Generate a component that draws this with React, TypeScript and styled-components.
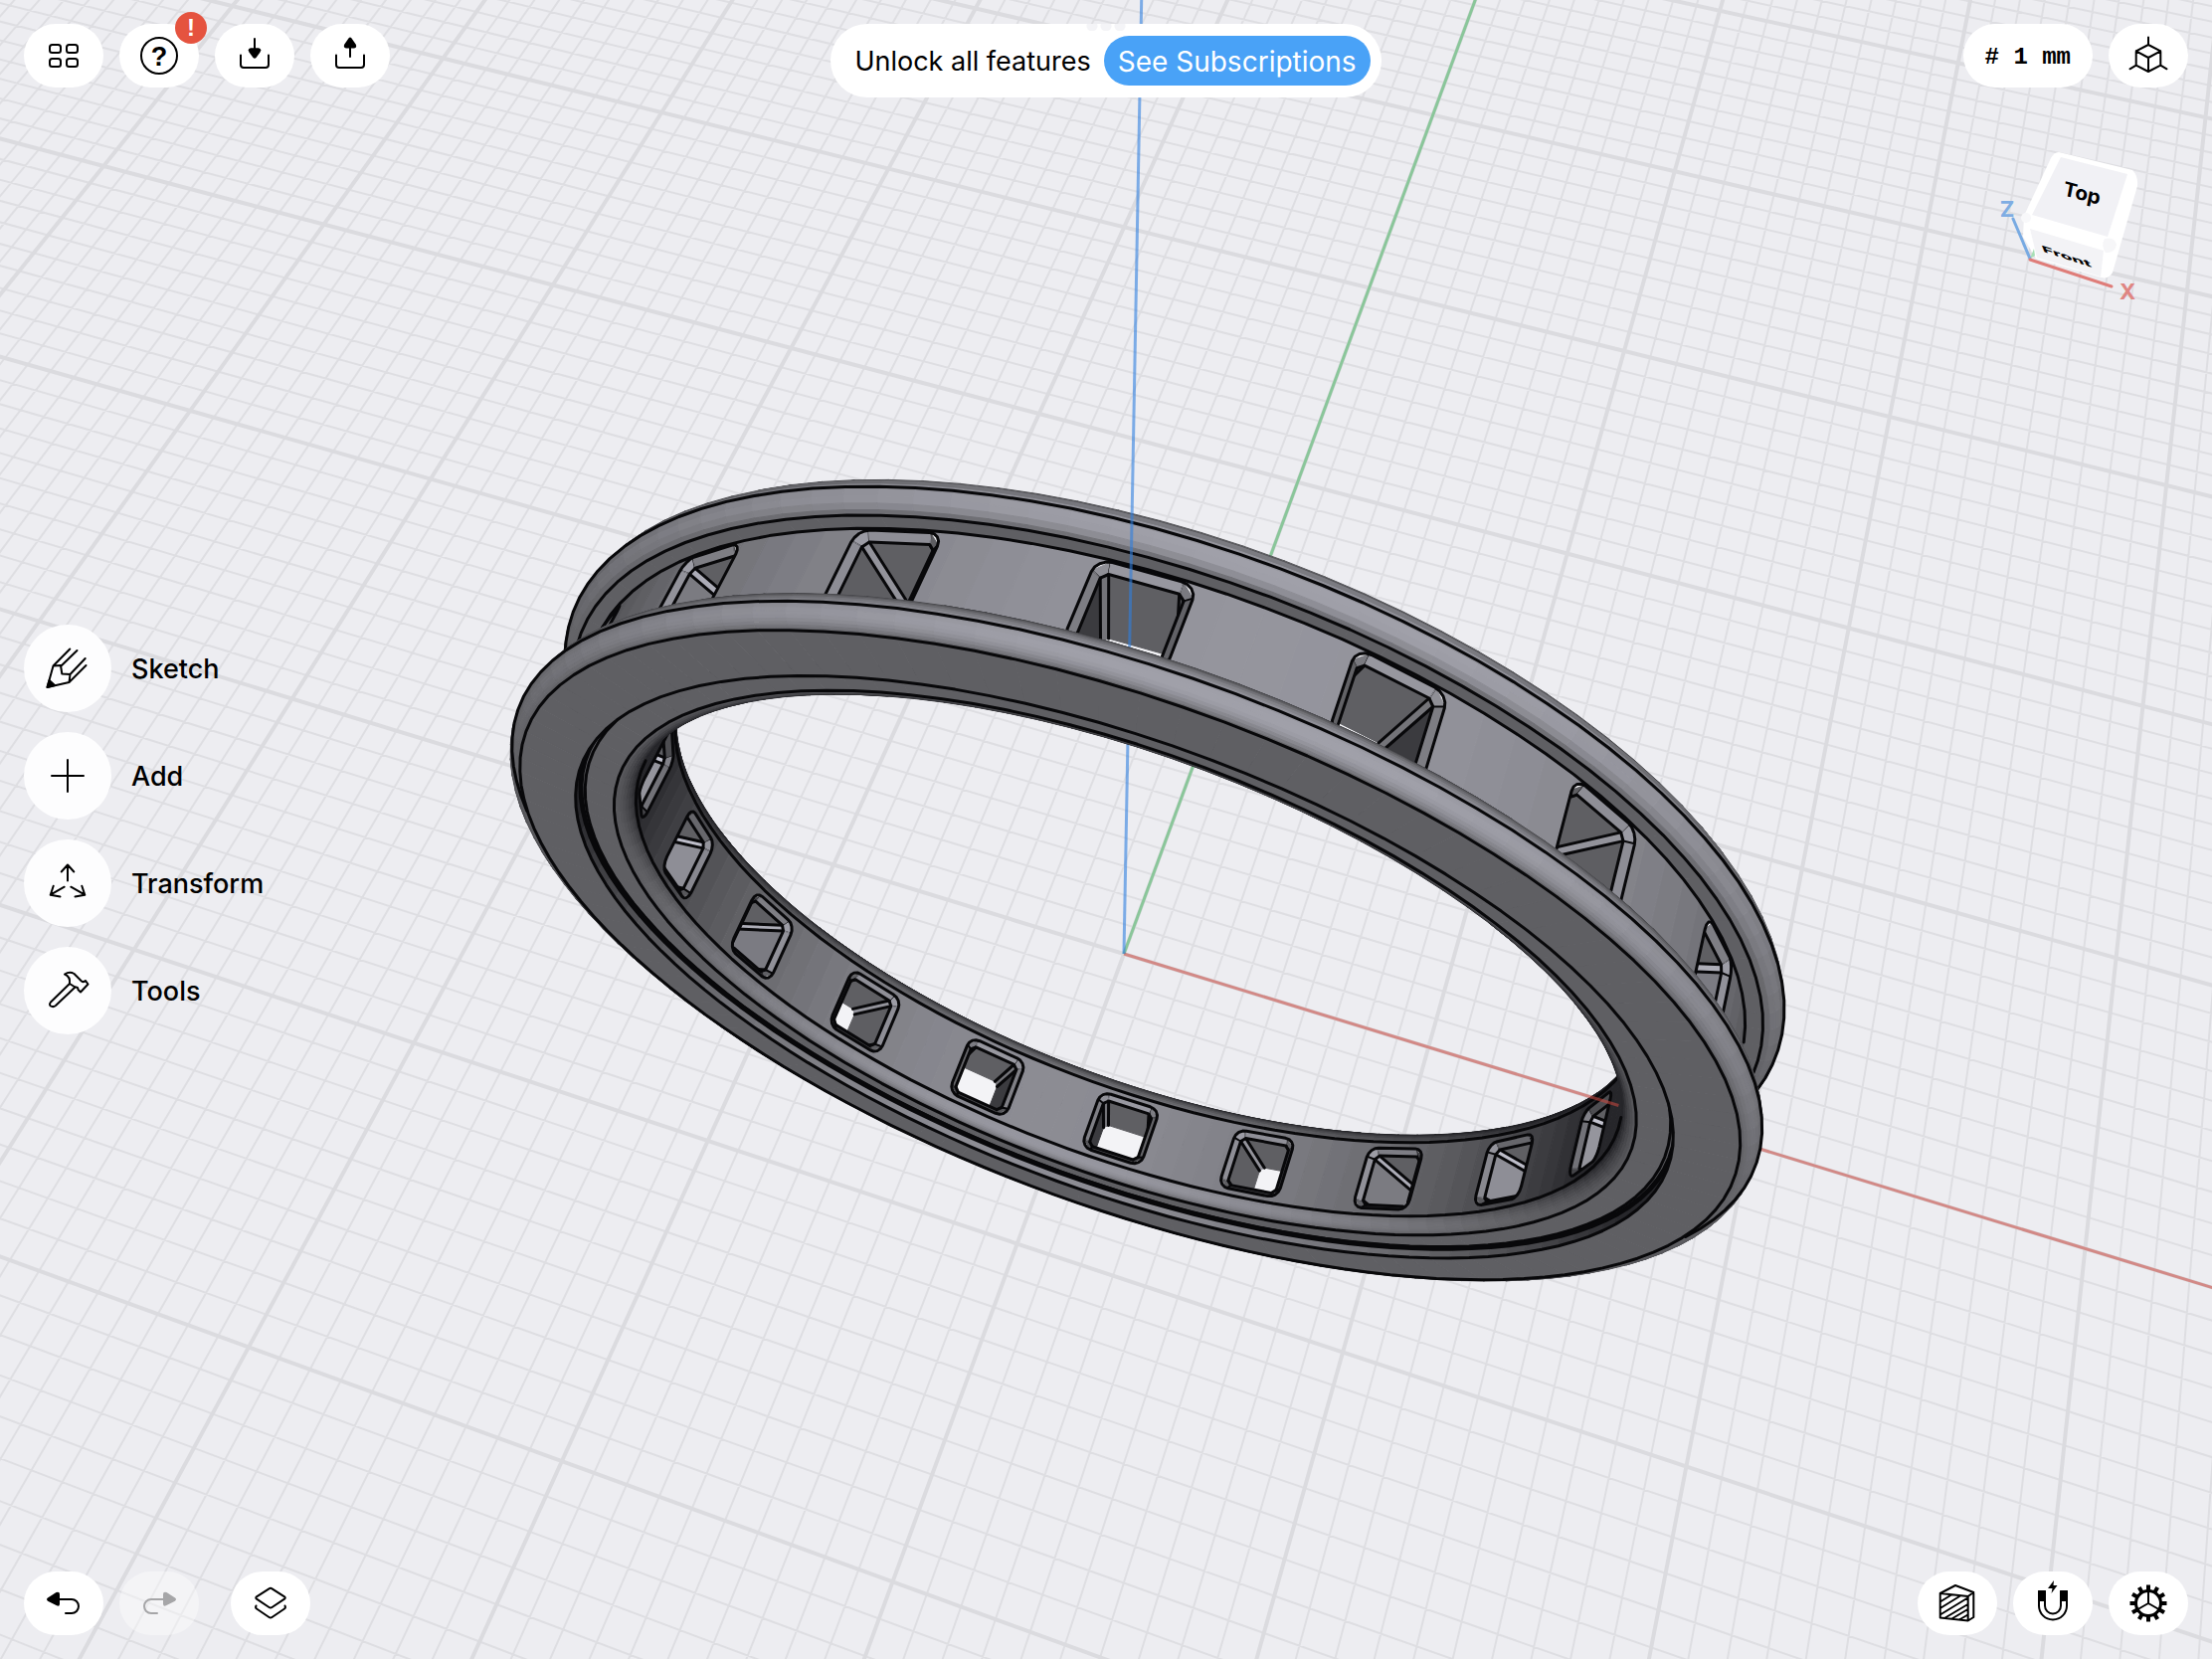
import React from "react";
import styled, { createGlobalStyle } from "styled-components";

const GlobalStyle = createGlobalStyle`
  * { box-sizing: border-box; }
  body { margin: 0; background: #ededf1; }
`;

/* ---------- 3D scene: camera, shading and primitives ---------- */

type V3 = [number, number, number];
type V2 = [number, number];

const VIEW_W = 2224;
const VIEW_H = 1668;
const FOCAL = VIEW_H / 2 / Math.tan(Math.PI / 8);
const PITCH = (61.35 * Math.PI) / 180;
const YAW = (18.7 * Math.PI) / 180;
const DIST = 63.9;

const RIGHT: V3 = [Math.cos(YAW), Math.sin(YAW), 0];
const DOWN: V3 = [Math.sin(YAW) * Math.sin(PITCH), -Math.cos(YAW) * Math.sin(PITCH), -Math.cos(PITCH)];
const FWD: V3 = [-Math.sin(YAW) * Math.cos(PITCH), Math.cos(YAW) * Math.cos(PITCH), -Math.sin(PITCH)];
const ORIGIN: V3 = [(DIST * 18) / FOCAL, (DIST * 125) / FOCAL, DIST];

const dot = (a: V3, b: V3) => a[0] * b[0] + a[1] * b[1] + a[2] * b[2];
const sub = (a: V3, b: V3): V3 => [a[0] - b[0], a[1] - b[1], a[2] - b[2]];
const CAMERA: V3 = [0, 1, 2].map(
  (i) => -(ORIGIN[0] * RIGHT[i] + ORIGIN[1] * DOWN[i] + ORIGIN[2] * FWD[i])
) as V3;

const depth = (p: V3) => dot(p, FWD) + ORIGIN[2];
const project = (p: V3): V2 => {
  const w = depth(p);
  return [
    VIEW_W / 2 + (FOCAL * (dot(p, RIGHT) + ORIGIN[0])) / w,
    VIEW_H / 2 + (FOCAL * (dot(p, DOWN) + ORIGIN[1])) / w,
  ];
};
const faces = (p: V3, n: V3) => dot(sub(CAMERA, p), n) > 0;

const toPath = (pts: V3[], close = true) =>
  pts
    .map((p, i) => {
      const [x, y] = project(p);
      return `${i ? "L" : "M"}${x.toFixed(1)} ${y.toFixed(1)}`;
    })
    .join("") + (close ? "Z" : "");

const shade = (n: V3, gain = 1) => {
  const len = Math.hypot(...n) || 1;
  const lit = Math.max(0, -dot(n, FWD) / len);
  const v = Math.min(160, 40 + 122 * lit) * gain;
  const blue = v + 4 + Math.max(0, (v - 95) * 0.08);
  return `rgb(${Math.round(v)},${Math.round(v)},${Math.round(blue)})`;
};

/* ---------- Ground grid ---------- */

const GRID_REACH = 130;
const NEAR = 6;

const groundLine = (a: V3, b: V3) => {
  let [p, q] = [a, b];
  const wp = depth(p);
  const wq = depth(q);
  if (wp < NEAR && wq < NEAR) return "";
  const cut = (NEAR - wp) / (wq - wp);
  const mid: V3 = [p[0] + (q[0] - p[0]) * cut, p[1] + (q[1] - p[1]) * cut, 0];
  if (wp < NEAR) p = mid;
  if (wq < NEAR) q = mid;
  return toPath([p, q], false);
};

const gridPath = (major: boolean) => {
  let d = "";
  for (let k = -GRID_REACH; k <= GRID_REACH; k++) {
    if ((k % 10 === 0) !== major) continue;
    d += groundLine([k, -GRID_REACH, 0], [k, GRID_REACH, 0]);
    d += groundLine([-GRID_REACH, k, 0], [GRID_REACH, k, 0]);
  }
  return d;
};

/* ---------- Ring ---------- */

const STEP = 3;
const ROUND = 0.5;
const FACE_Y = 2.33;
const RAIL_Y = 1.83;
const SIDE_Y = 1.33;
const FACE_R = 19.42;
const RAIL_R = FACE_R + ROUND;
const BAND_R = 18.93;
const GROOVE_R = 17.6;
const BORE_R = 16;

const rad = (deg: number) => (deg * Math.PI) / 180;
const onCircle = (y: number, r: number, deg: number): V3 => [
  r * Math.cos(rad(deg)),
  y,
  r * Math.sin(rad(deg)),
];
const turn = (ny: number, nr: number, deg: number): V3 => [
  nr * Math.cos(rad(deg)),
  ny,
  nr * Math.sin(rad(deg)),
];

interface Piece {
  d: string;
  fill?: string;
  clip?: string;
  line?: number;
}

const strip = (a: V2, b: V2, n: V2, gain = 1): Piece[] => {
  const out: Piece[] = [];
  for (let t = 0; t < 360; t += STEP) {
    const mid = onCircle((a[0] + b[0]) / 2, (a[1] + b[1]) / 2, t + STEP / 2);
    const normal = turn(n[0], n[1], t + STEP / 2);
    if (!faces(mid, normal)) continue;
    out.push({
      d: toPath([
        onCircle(a[0], a[1], t),
        onCircle(a[0], a[1], t + STEP),
        onCircle(b[0], b[1], t + STEP),
        onCircle(b[0], b[1], t),
      ]),
      fill: shade(normal, gain),
    });
  }
  return out;
};

const fillet = (c: V2, r: number, from: number, to: number, gain = 1, inward = false): Piece[] => {
  const parts = 9;
  const out: Piece[] = [];
  for (let i = 0; i < parts; i++) {
    const a0 = rad(from + ((to - from) * i) / parts);
    const a1 = rad(from + ((to - from) * (i + 1)) / parts);
    const am = (a0 + a1) / 2;
    const s = inward ? -1 : 1;
    out.push(
      ...strip(
        [c[0] + r * Math.cos(a0), c[1] + s * r * Math.sin(a0)],
        [c[0] + r * Math.cos(a1), c[1] + s * r * Math.sin(a1)],
        [Math.cos(am), s * Math.sin(am)],
        gain
      )
    );
  }
  return out;
};

const edge = (y: number, r: number, normals: V2[], line = 3): Piece[] => {
  let d = "";
  let open = false;
  for (let t = 0; t < 360; t += STEP) {
    const mid = onCircle(y, r, t + STEP / 2);
    if (normals.some((n) => faces(mid, turn(n[0], n[1], t + STEP / 2)))) {
      if (!open) d += toPath([onCircle(y, r, t)], false);
      d += toPath([onCircle(y, r, t + STEP)], false).replace("M", "L");
      open = true;
    } else open = false;
  }
  return [{ d, line }];
};

/* Rounded-square section, as eight corners of a chamfered square. */
const section = (half: number, corner: number): V2[] => {
  const k = half - corner;
  return [
    [k, half], [half, k], [half, -k], [k, -half],
    [-k, -half], [-half, -k], [-half, k], [-k, half],
  ];
};
const roundLoop = (half: number, corner: number): V2[] => {
  const pts: V2[] = [];
  const k = half - corner;
  [[k, k, 90], [k, -k, 0], [-k, -k, -90], [-k, k, -180]].forEach(([cx, cy, start]) => {
    for (let i = 0; i <= 4; i++) {
      const a = rad(start - (i * 90) / 4);
      pts.push([cx + corner * Math.cos(a), cy + corner * Math.sin(a)]);
    }
  });
  return pts;
};

const place = (deg: number, r: number, [t, y]: V2): V3 => {
  const radial = Math.sqrt(r * r - t * t);
  const c = Math.cos(rad(deg));
  const s = Math.sin(rad(deg));
  return [radial * c - t * s, y, radial * s + t * c];
};

const hole = (deg: number, outside: boolean): Piece[] => {
  const sign = outside ? 1 : -1;
  const mouthR = outside ? BAND_R : BORE_R;
  const lipR = mouthR - sign * 0.2;
  const endR = outside ? BORE_R : BAND_R;
  const mouth = outside ? 1.27 : 1.21;
  const center = place(deg, mouthR, [0, 0]);
  const outward = turn(0, sign, deg);
  if (!faces(center, outward)) return [];

  const out: Piece[] = [];
  const clip = toPath(roundLoop(mouth, 0.4).map((q) => place(deg, mouthR, q)));
  out.push({ d: clip, fill: "#f3f3f6" });

  const inner = section(mouth - 0.22, 0.16);
  const outer = section(mouth, 0.36);
  const c = Math.cos(rad(deg));
  const s = Math.sin(rad(deg));
  const tangent: V3 = [-s, 0, c];

  inner.forEach((q, i) => {
    const next = inner[(i + 1) % 8];
    const nt = -(q[0] + next[0]) / 2;
    const ny = -(q[1] + next[1]) / 2;
    const normal: V3 = [tangent[0] * nt, ny, tangent[2] * nt];
    const at = place(deg, lipR, [-nt, -ny]);
    if (!faces(at, normal)) return;
    const isCorner = i % 2 === 0;
    out.push({
      d: toPath([place(deg, lipR, q), place(deg, lipR, next), place(deg, endR, next), place(deg, endR, q)]),
      fill: isCorner ? shade(normal, 1.25) : shade(normal, 1),
      clip,
    });
  });
  inner.forEach((q, i) => {
    const neighbours = [inner[(i + 7) % 8], inner[(i + 1) % 8]];
    const seen = neighbours.some((m) => {
      const nt = -(q[0] + m[0]) / 2;
      const ny = -(q[1] + m[1]) / 2;
      return faces(place(deg, lipR, q), [tangent[0] * nt, ny, tangent[2] * nt]);
    });
    if (seen) out.push({ d: toPath([place(deg, lipR, q), place(deg, endR, q)], false), clip, line: 3 });
  });
  inner.forEach((q, i) => {
    const j = (i + 1) % 8;
    const nt = -(q[0] + inner[j][0]) / 2;
    const ny = -(q[1] + inner[j][1]) / 2;
    const normal: V3 = [tangent[0] * nt + outward[0], ny, tangent[2] * nt + outward[2]];
    const at = place(deg, mouthR, [-nt * 1.1, -ny * 1.1]);
    if (!faces(at, normal)) return;
    out.push({
      d: toPath([
        place(deg, lipR, q),
        place(deg, lipR, inner[j]),
        place(deg, mouthR, outer[j]),
        place(deg, mouthR, outer[i]),
      ]),
      fill: shade(normal, 0.98),
      clip,
    });
    out.push({ d: toPath([place(deg, lipR, q), place(deg, lipR, inner[j])], false), clip, line: 3 });
    if (i % 2 === 0) {
      out.push({ d: toPath([place(deg, lipR, q), place(deg, mouthR, outer[i])], false), clip, line: 2 });
      out.push({ d: toPath([place(deg, lipR, inner[j]), place(deg, mouthR, outer[j])], false), clip, line: 2 });
    }
  });
  out.push({ d: clip, line: 3 });
  return out;
};

const HOLE_ANGLES = Array.from({ length: 18 }, (_, i) => -90 + i * 20);

const backPieces: Piece[] = [
  ...fillet([RAIL_Y, FACE_R], ROUND, 0, 180),
  ...edge(RAIL_Y, RAIL_R, [[0, 1], [-1, 1]]),
  ...strip([SIDE_Y, FACE_R], [SIDE_Y, BAND_R], [-1, 0]),
  ...edge(SIDE_Y, FACE_R, [[-1, 0]]),
  ...fillet([1.46, 16.5], ROUND, 0, 90, 0.8, true),
  ...strip([1.46, BORE_R], [-1.46, BORE_R], [0, -1], 0.94),
  ...edge(1.46, BORE_R, [[0, -1]]),
  ...HOLE_ANGLES.flatMap((a) => hole(a, false)),
  ...strip([SIDE_Y, BAND_R], [-SIDE_Y, BAND_R], [0, 1]),
  ...edge(SIDE_Y, BAND_R, [[0, 1]]),
  ...HOLE_ANGLES.flatMap((a) => hole(a, true)),
];

const frontPieces: Piece[] = [
  ...fillet([-RAIL_Y, FACE_R], ROUND, 0, 90),
  ...fillet([-1.46, 16.5], ROUND, 90, 180, 0.94, true),
  ...edge(-1.46, BORE_R, [[0, -1]]),
  ...strip([-1.96, 16.5], [-1.96, GROOVE_R], [-1, 0]),
  ...edge(-1.96, 16.5, [[-1, 0]]),
  ...edge(-1.96, GROOVE_R - 0.14, [[-1, 0]]),
  ...strip([-1.96, GROOVE_R], [-FACE_Y, GROOVE_R], [0, -1], 0.95),
  ...edge(-1.96, GROOVE_R, [[-1, 0]], 5),
  ...fillet([-RAIL_Y, FACE_R], ROUND, 90, 180),
  ...edge(-RAIL_Y, RAIL_R, [[0, 1], [-1, 1]]),
  ...strip([-FACE_Y, GROOVE_R], [-FACE_Y, FACE_R], [-1, 0]),
  ...edge(-FACE_Y, GROOVE_R, [[-1, 0]]),
  ...edge(-FACE_Y, FACE_R, [[-1, 0]]),
];

const Pieces = ({ items, name }: { items: Piece[]; name: string }) => (
  <g strokeLinejoin="round" strokeLinecap="round">
    {items.map((p, i) => (
      <g key={i}>
        {p.clip && (
          <clipPath id={`${name}${i}`}>
            <path d={p.clip} />
          </clipPath>
        )}
        <path
          d={p.d}
          fill={p.fill ?? "none"}
          stroke={p.fill ?? "#08080a"}
          strokeWidth={p.line ?? 1}
          clipPath={p.clip ? `url(#${name}${i})` : undefined}
        />
      </g>
    ))}
  </g>
);

const Scene = () => (
  <SceneSvg viewBox={`0 0 ${VIEW_W} ${VIEW_H}`} preserveAspectRatio="xMidYMid slice" aria-label="Ring model">
    <path d={gridPath(false)} stroke="#dedee2" strokeWidth={2} fill="none" />
    <path d={gridPath(true)} stroke="#dbdbdf" strokeWidth={4} fill="none" />
    <path d={toPath([[0, 0, 0], [0, 120, 0]], false)} stroke="#3fb35a" strokeOpacity={0.52} strokeWidth={3} />
    <Pieces items={backPieces} name="b" />
    <path
      d={toPath([[0, 0, 0], [16, 0, 0]], false) + toPath([[19, 0, 0], [90, 0, 0]], false)}
      stroke="#cc4a40"
      strokeOpacity={0.56}
      strokeWidth={3}
    />
    <path d={toPath([[0, 0, 0], [0, 0, 45]], false)} stroke="#2f7fe0" strokeOpacity={0.6} strokeWidth={3} />
    <Pieces items={frontPieces} name="f" />
  </SceneSvg>
);

/* ---------- Interface ---------- */

const Stage = styled.main`
  position: relative;
  display: flex;
  flex-direction: column;
  justify-content: space-between;
  min-height: 100vh;
  padding: 24px;
  overflow: hidden;
  background: #ededf1;
  color: #000;
  font-family: Inter, "Liberation Sans", sans-serif;
`;

const SceneSvg = styled.svg`
  position: absolute;
  inset: 0;
  width: 100%;
  height: 100%;
`;

const Bar = styled.div<{ $end?: boolean }>`
  position: relative;
  display: grid;
  grid-template-columns: 1fr auto 1fr;
  align-items: ${(p) => (p.$end ? "end" : "start")};
  height: 74px;
`;

const Group = styled.div<{ $right?: boolean }>`
  display: flex;
  gap: 16px;
  justify-content: ${(p) => (p.$right ? "flex-end" : "flex-start")};
`;

const Pill = styled.button<{ $apart?: boolean }>`
  position: relative;
  display: flex;
  align-items: center;
  justify-content: center;
  min-width: 80px;
  height: 64px;
  margin: 0 0 0 ${(p) => (p.$apart ? "16px" : "0")};
  padding: 0;
  border: 0;
  border-radius: 32px;
  background: #fff;
  color: #000;
  &:disabled {
    background: rgba(255, 255, 255, 0.4);
    color: #a6a6a8;
  }
`;

const UnitPill = styled(Pill)`
  padding: 4px 22px 0;
  font: bold 24px/32px "Liberation Mono", monospace;
  white-space: pre;
`;

const Badge = styled.span`
  position: absolute;
  top: -12px;
  right: -8px;
  width: 32px;
  height: 32px;
  border-radius: 50%;
  background: #e5533f;
  color: #fff;
  font-size: 24px;
  font-weight: 700;
  line-height: 32px;
  text-align: center;
`;

const Banner = styled.section`
  position: relative;
  display: flex;
  align-items: center;
  gap: 13px;
  height: 74px;
  padding: 0 11px 0 24px;
  border-radius: 37px;
  background: #fff;
  font-size: 27px;
  line-height: 36px;
`;

const Label = styled.span`
  padding-top: 2px;
`;

const Handle = styled.span`
  position: absolute;
  top: 0;
  left: 50%;
  width: 42px;
  height: 7px;
  margin-left: -21px;
  background: radial-gradient(circle at 50% 2px, #f4f4f7 5px, transparent 6px) 0 0 / 14px 7px;
`;

const Subscribe = styled.button`
  height: 50px;
  padding: 2px 14px 0;
  border: 0;
  border-radius: 25px;
  background: #49a2f7;
  color: #fff;
  font: 400 28px/36px Inter, "Liberation Sans", sans-serif;
`;

const Tools = styled.nav`
  position: relative;
  display: flex;
  flex-direction: column;
  align-items: flex-start;
  gap: 20px;
`;

const Tool = styled.button`
  display: flex;
  align-items: center;
  gap: 20px;
  padding: 0;
  border: 0;
  background: none;
  color: #000;
  font: 500 27px/36px Inter, "Liberation Sans", sans-serif;
`;

const Disc = styled.span`
  display: block;
  width: 88px;
  height: 88px;
  border-radius: 50%;
  background: #fdfdfe;
`;

const IconSvg = styled.svg`
  display: block;
  fill: none;
  stroke: currentColor;
  stroke-width: 2;
  stroke-linecap: round;
  stroke-linejoin: round;
`;

const ViewCube = styled.svg`
  position: absolute;
  top: 140px;
  right: 64px;
  width: 150px;
  height: 170px;
`;

const PillIcon = ({ children }: { children: React.ReactNode }) => (
  <IconSvg width={80} height={64} viewBox="0 0 80 64" aria-hidden>{children}</IconSvg>
);
const DiscIcon = ({ children }: { children: React.ReactNode }) => (
  <Disc>
    <IconSvg width={88} height={88} viewBox="0 0 88 88" aria-hidden>{children}</IconSvg>
  </Disc>
);

const TURN_ARROW = (
  <>
    <path d="M36 28H48a7 7 0 0 1 0 14H42" />
    <path d="M24 26.500 32.500 21Q36 19.800 36 23V32.500Q36 35.600 33 34.300L24 29.700Q22 28 24 26.500Z" fill="currentColor" stroke="none" />
  </>
);

const TEETH = Array.from({ length: 12 }, (_, i) => i * 30);

export default function App() {
  return (
    <>
      <GlobalStyle />
      <Stage>
        <Scene />
        <Bar as="header">
          <Group>
            <Pill aria-label="Designs">
              <PillIcon>
                <rect x="26" y="21" width="11" height="8" rx="2.5" />
                <rect x="43" y="21" width="11" height="8" rx="2.5" />
                <rect x="26" y="35" width="11" height="8" rx="2.5" />
                <rect x="43" y="35" width="11" height="8" rx="2.5" />
              </PillIcon>
            </Pill>
            <Pill aria-label="Help">
              <PillIcon>
                <circle cx="40" cy="32" r="18" />
                <text x="40" y="42" textAnchor="middle" fontSize="27" fontWeight="900" fill="currentColor" stroke="none">?</text>
              </PillIcon>
              <Badge>!</Badge>
            </Pill>
            <Pill aria-label="Import">
              <PillIcon>
                <path d="M26 31.500V41a3 3 0 0 0 3 3H51a3 3 0 0 0 3-3V31.500M40 15V27" />
                <path d="M36 24.300H44Q47.500 25 45.500 28.500L41.500 34Q40 35.500 38.500 34L34.500 28.500Q32.500 25 36 24.300Z" fill="currentColor" stroke="none" />
              </PillIcon>
            </Pill>
            <Pill aria-label="Export">
              <PillIcon>
                <path d="M26 31.500V41a3 3 0 0 0 3 3H51a3 3 0 0 0 3-3V31.500M40 33V20" />
                <path d="M36 24.500H44Q47.500 23.800 45.500 20.300L41.500 14.500Q40 12.500 38.500 14.500L34.500 20.300Q32.500 23.800 36 24.500Z" fill="currentColor" stroke="none" />
              </PillIcon>
            </Pill>
          </Group>
          <Banner>
            <Handle />
            <Label>Unlock all features</Label>
            <Subscribe>See Subscriptions</Subscribe>
          </Banner>
          <Group $right>
            <UnitPill># 1 mm</UnitPill>
            <Pill aria-label="View">
              <PillIcon>
                <path d="M40 13.500V21L52.300 27.300V41.700L40 48 27.700 41.700V27.300L40 21M27.700 27.300 40 34 52.300 27.300M40 34V48M27.700 41.700 21.500 45.300M52.300 41.700 58.500 45.300" />
              </PillIcon>
            </Pill>
          </Group>
        </Bar>

        <ViewCube viewBox="0 0 150 170" aria-label="View cube">
          <path d="M60 13 134 31Q140 37 139 47L114 134Q110 141 103 139L37 120 24 98 25 77 52 19Q55 13 60 13Z" fill="#fff" />
          <path d="M62 18 129 35 109 98 33 76Z" fill="#f1f1f5" />
          <path d="M31 90 105 112 102 138 38 119Z" fill="#f3f3f6" />
          <path d="M106 100Q116 98 118 106 116 115 107 114 102 107 106 100Z" fill="#f6f6f8" />
          <circle cx="27" cy="79" r="5" fill="#f8f8fa" />
          <path d="M31 120 35 110 36 117Z" fill="#a8dfb6" />
          <path d="M14 80 31 120" stroke="#78aae2" strokeWidth="3" strokeLinecap="round" />
          <path d="M31 121 113 148" stroke="#df7d79" strokeWidth="3" strokeLinecap="round" />
          <g fontFamily="Inter, sans-serif" textAnchor="middle">
            <text transform="matrix(0.96 0.26 -0.18 0.92 82 61)" fontSize="21" fontWeight="700">Top</text>
            <text transform="matrix(1.05 0.34 0.2 0.5 69 121)" fontSize="18" fontWeight="800">Front</text>
            <text x="8" y="78" fontSize="22" fontWeight="700" fill="#7fade3">Z</text>
            <text x="129" y="161" fontSize="22" fontWeight="700" fill="#df8683">X</text>
          </g>
        </ViewCube>

        <Tools>
          <Tool>
            <DiscIcon>
              <path d="M46.300 24.500 29.500 41.500 23.500 63 45.500 58 62.500 41M53.500 26 37 42M29.500 41.500 37 41 38.300 49.500 46.500 50 45.500 58M46.500 50 61.700 34" />
              <path d="M23.500 63 25.500 56 31 61Z" fill="currentColor" />
            </DiscIcon>
            <Label>Sketch</Label>
          </Tool>
          <Tool>
            <DiscIcon>
              <path d="M44 28V60M28 44H60" />
            </DiscIcon>
            <Label>Add</Label>
          </Tool>
          <Tool>
            <DiscIcon>
              <path d="M44 41.500V26M37.700 32.500 44 25.500 50.300 32.500M40.700 47.700 26.700 55.700M29.700 46.700 26.700 55.700 36.500 57.500M47.300 47.700 61.300 55.700M58.300 46.700 61.300 55.700 51.500 57.500" />
            </DiscIcon>
            <Label>Transform</Label>
          </Tool>
          <Tool>
            <DiscIcon>
              <path d="M46 37 27 55.500Q25 58 27 59.500 29.500 61 32 59L51.500 40.500" />
              <path d="M41 27.500Q46 24.500 50.500 27L58 34.500Q60 36 62 34L64.500 37.500 57 45.500 54.500 43Q54.500 40 51.500 40.500L46 37Q47 30 41 27.500Z" />
            </DiscIcon>
            <Label>Tools</Label>
          </Tool>
        </Tools>

        <Bar as="footer" $end>
          <Group>
            <Pill aria-label="Undo">
              <PillIcon>{TURN_ARROW}</PillIcon>
            </Pill>
            <Pill aria-label="Redo" disabled>
              <PillIcon>
                <g transform="translate(80 0) scale(-1 1)">{TURN_ARROW}</g>
              </PillIcon>
            </Pill>
            <Pill aria-label="Items" $apart>
              <PillIcon>
                <path d="M38.500 17.300Q40 16.300 41.500 17.300L54 25.300Q55.500 26.500 54 27.700L41.500 36Q40 37 38.500 36L26 27.700Q24.500 26.500 26 25.300Z" />
                <path d="M25.500 34.500Q24.500 36.500 26 37.500L38.500 46Q40 47 41.500 46L54 37.500Q55.500 36.500 54.500 34.500" />
              </PillIcon>
            </Pill>
          </Group>
          <span />
          <Group $right>
            <Pill aria-label="Section view">
              <PillIcon>
                <path d="M22.700 22 38 14 56.300 21V46L50.700 49.500 22.700 46.500ZM22.700 22 50.700 25 56.300 21M50.700 25V49.500M22.700 30.500 34 23.500M22.700 37 43 24.500M22.700 43.500 50.500 26.500M27 47 50.500 33M34.500 47.500 50.500 38M42 48.500 50.500 43.500" />
              </PillIcon>
            </Pill>
            <Pill aria-label="Snapping">
              <PillIcon>
                <path d="M26 20H32V34.500a8 8 0 0 0 16 0V20H54V34.500a14 14 0 0 1-28 0Z" />
                <path d="M26 20H32V29H26ZM48 20H54V29H48Z" fill="currentColor" />
                <path d="M41 9 35 17H39.500L38.500 22 44.500 14H40.500Z" fill="currentColor" stroke="none" />
              </PillIcon>
            </Pill>
            <Pill aria-label="Settings">
              <PillIcon>
                <circle cx="40" cy="32" r="12.500" strokeWidth="3" />
                <path d="M40 32V20M40 32 29.500 38M40 32 50.500 38" />
                {TEETH.map((a) => (
                  <path key={a} d="M40 19V13.500" strokeWidth="4" strokeLinecap="butt" transform={`rotate(${a} 40 32)`} />
                ))}
              </PillIcon>
            </Pill>
          </Group>
        </Bar>
      </Stage>
    </>
  );
}
